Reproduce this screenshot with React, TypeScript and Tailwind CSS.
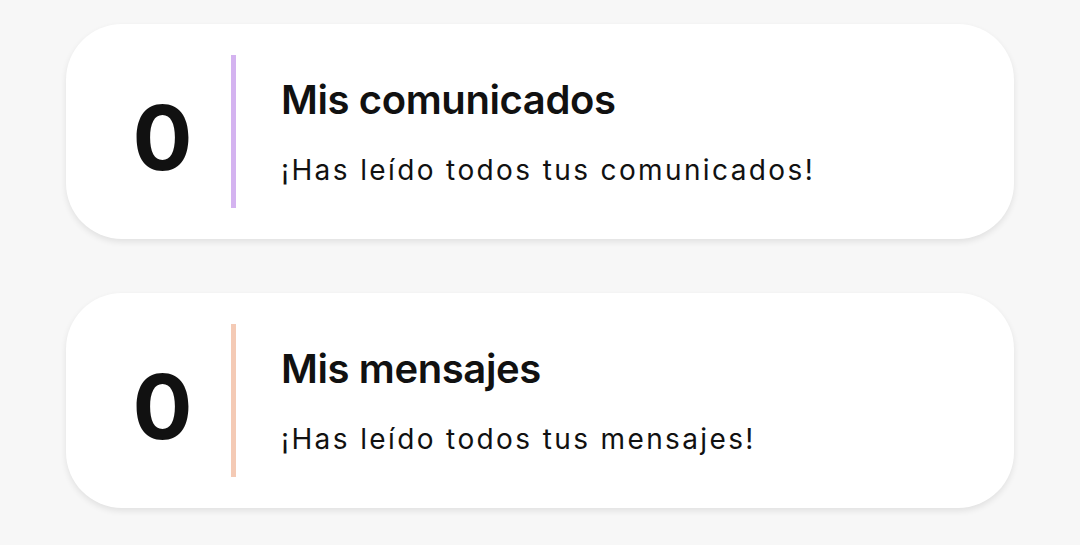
type CardProps = {
  count: number;
  title: string;
  subtitle: string;
  accent: string;
};

function SummaryCard({ count, title, subtitle, accent }: CardProps) {
  return (
    <article className="flex h-[215px] items-center rounded-[56px] bg-white shadow-[0_3px_6px_rgba(0,0,0,0.09)]">
      <div className="flex w-[165px] shrink-0 justify-center pl-[28px] pt-[12px]">
        <span className="text-[89px] font-bold leading-none text-[#111]">
          {count}
        </span>
      </div>
      <div className={`h-[153px] w-[5px] shrink-0 ${accent}`} />
      <div className="flex flex-col gap-[36px] pl-[45px]">
        <h3 className="text-[40px] font-semibold leading-none tracking-[-0.01em] text-[#111]">
          {title}
        </h3>
        <p className="text-[28px] leading-none tracking-[0.085em] text-[#111]">
          {subtitle}
        </p>
      </div>
    </article>
  );
}

export default function App() {
  return (
    <div className="min-h-[545px] bg-[#f7f7f7] px-[66px] pt-[24px] font-['Inter',sans-serif]">
      <div className="flex flex-col gap-[54px]">
        <SummaryCard
          count={0}
          title="Mis comunicados"
          subtitle="¡Has leído todos tus comunicados!"
          accent="bg-[#d4b3f0]"
        />
        <SummaryCard
          count={0}
          title="Mis mensajes"
          subtitle="¡Has leído todos tus mensajes!"
          accent="bg-[#f4cab5]"
        />
      </div>
    </div>
  );
}
